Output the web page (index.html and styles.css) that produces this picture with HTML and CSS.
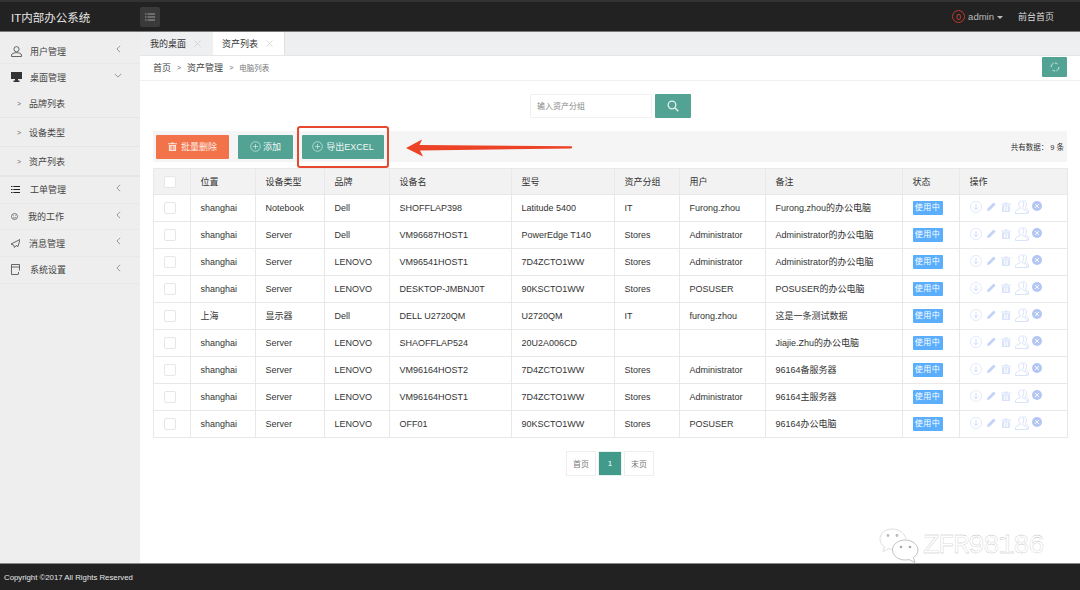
FILE: index.html
```html
<!DOCTYPE html>
<html lang="zh">
<head>
<meta charset="utf-8">
<title>IT内部办公系统</title>
<link rel="stylesheet" href="styles.css">
</head>
<body>
<svg class="defs" width="0" height="0" aria-hidden="true">
  <symbol id="i-left" viewBox="0 0 6 10"><path d="M5 1 1 5l4 4" fill="none" stroke="#666" stroke-width=".8"/></symbol>
  <symbol id="i-down" viewBox="0 0 10 6"><path d="M1 1l4 4 4-4" fill="none" stroke="#666" stroke-width=".8"/></symbol>
  <symbol id="i-plus" viewBox="0 0 11 11"><circle cx="5.5" cy="5.5" r="4.8" fill="none" stroke="#d5ebe6" stroke-width=".7"/><path d="M5.5 3v5M3 5.5h5" stroke="#d5ebe6" stroke-width=".7"/></symbol>
  <symbol id="i-dl" viewBox="0 0 12 12"><circle cx="6" cy="6" r="5.5" fill="none" stroke="#d9e4fb" stroke-width=".8"/><path d="M6 3v5.5M3.8 6.5 6 8.7l2.2-2.2" fill="none" stroke="#c5d5f8" stroke-width=".8"/></symbol>
  <symbol id="i-pen" viewBox="0 0 9 9"><path d="M0 9l.6-2.6L6.6.4l2 2-6 6z" fill="#c3d3f7"/></symbol>
  <symbol id="i-bin" viewBox="0 0 10 10"><path d="M3.5 1.5V.6h3v.9H10v1H0v-1zM1 3.2h8V10H1zM3 4.2V9h.8V4.2zm1.7 0V9h.8V4.2zm1.6 0V9h.8V4.2z" fill="#d9e4fb" fill-rule="evenodd"/></symbol>
  <symbol id="i-bin-w" viewBox="0 0 10 10"><path d="M3.5 1.5V.6h3v.9H10v1H0v-1zM1 3.2h8V10H1zM3 4.2V9h.8V4.2zm1.7 0V9h.8V4.2zm1.6 0V9h.8V4.2z" fill="#fbe3da" fill-rule="evenodd"/></symbol>
  <symbol id="i-user" viewBox="0 0 14 14"><path d="M6.500 1C4.700 1 3.700 2.500 3.700 4.200c0 1.500.6 2.600 1.400 3.300v1.100C3.500 9.400 1 10 .5 11.500v2h11.500v-2C11.500 10 9 9.400 7.400 8.600V7.500c.8-.7 1.400-1.800 1.400-3.300C8.800 2.500 8 1 6.500 1zM8 1c1.800-.4 3.500.6 3.600 2.800.1 1.500-.4 2.700-1.100 3.400v1.100c1.300.6 3 1.100 3 2.400v2.300H12" fill="none" stroke="#cfdcf9" stroke-width=".8"/></symbol>
  <symbol id="i-x" viewBox="0 0 10 10"><circle cx="5" cy="5" r="5" fill="#b3c6f4"/><path d="M3 3l4 4M7 3 3 7" stroke="#fff" stroke-width=".9"/></symbol>
  <symbol id="i-close" viewBox="0 0 7 7"><path d="M.5.500l6 6M6.500.500l-6 6" stroke="#ccc" stroke-width=".7"/></symbol>
</svg>

<div class="app">
  <header class="topbar">
    <div class="brand">IT内部办公系统</div>
    <button class="menu-btn" type="button" aria-label="菜单">
      <svg width="10" height="8" viewBox="0 0 10 8"><path d="M0 1h1.500M2.500 1H10M0 4h1.500M2.500 4H10M0 7h1.500M2.500 7H10" stroke="#aaa" stroke-width=".9"/></svg>
    </button>
    <div class="top-right">
      <span class="count">0</span>
      <span class="admin">admin</span>
      <span class="caret"></span>
      <span class="front">前台首页</span>
    </div>
  </header>

  <div class="middle">
    <aside class="sidebar">
      <div class="side-item tall"><svg class="side-icon" width="11" height="11" viewBox="0 0 11 11"><circle cx="5.500" cy="3.200" r="2.600" fill="none" stroke="#444" stroke-width=".8"/><path d="M.5 10.500V9c0-1.300 2.500-2.300 5-2.300s5 1 5 2.300v1.500z" fill="none" stroke="#444" stroke-width=".8"/></svg><span class="side-label">用户管理</span><svg class="chev" width="5" height="8"><use href="#i-left"/></svg></div>
      <div class="side-item open"><svg class="side-icon" width="11" height="10" viewBox="0 0 11 10"><path d="M0 0h11v7H7v1.500h1.500V10h-6V8.500H4V7H0zM1 1v5h9V1z" fill="#333" fill-rule="evenodd"/><path d="M1 1h9v5H1z" fill="#333"/></svg><span class="side-label">桌面管理</span><svg class="chev-d" width="8" height="5"><use href="#i-down"/></svg></div>
      <div class="side-sub first"><span class="sub-mark">&gt;</span>品牌列表</div>
      <div class="side-sub"><span class="sub-mark">&gt;</span>设备类型</div>
      <div class="side-sub last"><span class="sub-mark">&gt;</span>资产列表</div>
      <div class="side-item"><svg class="side-icon" width="9" height="7" viewBox="0 0 9 7"><path d="M0 .5h1.500M2.300.5H9M0 3.500h1.500M2.300 3.500H9M0 6.500h1.500M2.300 6.500H9" stroke="#222" stroke-width="1"/></svg><span class="side-label wide">工单管理</span><svg class="chev" width="5" height="8"><use href="#i-left"/></svg></div>
      <div class="side-item"><svg class="side-icon" width="7" height="7" viewBox="0 0 7 7"><circle cx="3.500" cy="3.500" r="3" fill="none" stroke="#444" stroke-width=".7"/><path d="M2 4.200c.8.900 2.200.9 3 0M2.200 2.600h.7M4.100 2.600h.7" stroke="#444" stroke-width=".6" fill="none"/></svg><span class="side-label work">我的工作</span><svg class="chev" width="5" height="8"><use href="#i-left"/></svg></div>
      <div class="side-item"><svg class="side-icon" width="9" height="9" viewBox="0 0 9 9"><path d="M9 .5 0 5l2.500 1L3.500 8.500 5 6.500l2 1z" fill="none" stroke="#444" stroke-width=".8"/></svg><span class="side-label msg">消息管理</span><svg class="chev" width="5" height="8"><use href="#i-left"/></svg></div>
      <div class="side-item"><svg class="side-icon" width="10" height="11" viewBox="0 0 10 11"><path d="M7 10.500H.5V.5h8v6M.5 3h8M7.500 8v2.500" fill="none" stroke="#444" stroke-width=".8"/></svg><span class="side-label sys">系统设置</span><svg class="chev" width="5" height="8"><use href="#i-left"/></svg></div>
    </aside>

    <main class="main">
      <nav class="tabs">
        <div class="tab">我的桌面<svg width="7" height="7"><use href="#i-close"/></svg></div>
        <div class="tab active">资产列表<svg width="7" height="7"><use href="#i-close"/></svg></div>
      </nav>

      <div class="crumbs">
        <span>首页</span><span class="sep">&gt;</span><span>资产管理</span><span class="sep">&gt;</span><span class="crumb-last">电脑列表</span>
        <button class="refresh" type="button" aria-label="刷新">
          <svg width="10" height="10" viewBox="0 0 10 10"><path d="M1 5a4 4 0 0 1 6.500-3.100M9 5a4 4 0 0 1-6.500 3.100" fill="none" stroke="#d8eee9" stroke-width=".9" stroke-dasharray="5 1"/></svg>
        </button>
      </div>

      <section class="content">
        <div class="search">
          <input class="search-input" type="text" placeholder="输入资产分组">
          <button class="search-btn" type="button" aria-label="搜索">
            <svg width="12" height="12" viewBox="0 0 12 12"><circle cx="5" cy="5" r="3.800" fill="none" stroke="#e4f2ef" stroke-width="1.300"/><path d="M8 8l3.300 3.300" stroke="#e4f2ef" stroke-width="1.500"/></svg>
          </button>
        </div>

        <div class="toolbar">
          <button class="btn btn-danger" type="button"><svg width="9" height="9"><use href="#i-bin-w"/></svg>批量删除</button>
          <button class="btn btn-add" type="button"><svg width="11" height="11"><use href="#i-plus"/></svg>添加</button>
          <button class="btn btn-export" type="button"><svg width="11" height="11"><use href="#i-plus"/></svg>导出EXCEL</button>
          <span class="total">共有数据： 9 条</span>
          <div class="red-box"></div>
          <svg class="arrow" width="168" height="20" viewBox="0 0 168 20"><path d="M0 10 16 1.500 13.500 7 165 8.300c1.500.1 1.500 2 0 2.100L14 12.500 17 18.500z" fill="#ec4226"/></svg>
        </div>

        <table class="grid">
          <colgroup>
            <col class="c1"><col class="c2"><col class="c3"><col class="c4"><col class="c5"><col class="c6"><col class="c7"><col class="c8"><col class="c9"><col class="c10"><col class="c11">
          </colgroup>
          <thead>
            <tr><th><span class="check"></span></th><th>位置</th><th>设备类型</th><th>品牌</th><th>设备名</th><th>型号</th><th>资产分组</th><th>用户</th><th>备注</th><th>状态</th><th>操作</th></tr>
          </thead>
          <tbody>
            <tr><td><span class="check"></span></td><td>shanghai</td><td>Notebook</td><td>Dell</td><td>SHOFFLAP398</td><td>Latitude 5400</td><td>IT</td><td>Furong.zhou</td><td>Furong.zhou的办公电脑</td><td><span class="badge">使用中</span></td><td><span class="ops"><svg class="o1"><use href="#i-dl"/></svg><svg class="o2"><use href="#i-pen"/></svg><svg class="o3"><use href="#i-bin"/></svg><svg class="o4"><use href="#i-user"/></svg><svg class="o5"><use href="#i-x"/></svg></span></td></tr>
            <tr><td><span class="check"></span></td><td>shanghai</td><td>Server</td><td>Dell</td><td>VM96687HOST1</td><td>PowerEdge T140</td><td>Stores</td><td>Administrator</td><td>Administrator的办公电脑</td><td><span class="badge">使用中</span></td><td><span class="ops"><svg class="o1"><use href="#i-dl"/></svg><svg class="o2"><use href="#i-pen"/></svg><svg class="o3"><use href="#i-bin"/></svg><svg class="o4"><use href="#i-user"/></svg><svg class="o5"><use href="#i-x"/></svg></span></td></tr>
            <tr><td><span class="check"></span></td><td>shanghai</td><td>Server</td><td>LENOVO</td><td>VM96541HOST1</td><td>7D4ZCTO1WW</td><td>Stores</td><td>Administrator</td><td>Administrator的办公电脑</td><td><span class="badge">使用中</span></td><td><span class="ops"><svg class="o1"><use href="#i-dl"/></svg><svg class="o2"><use href="#i-pen"/></svg><svg class="o3"><use href="#i-bin"/></svg><svg class="o4"><use href="#i-user"/></svg><svg class="o5"><use href="#i-x"/></svg></span></td></tr>
            <tr><td><span class="check"></span></td><td>shanghai</td><td>Server</td><td>LENOVO</td><td>DESKTOP-JMBNJ0T</td><td>90KSCTO1WW</td><td>Stores</td><td>POSUSER</td><td>POSUSER的办公电脑</td><td><span class="badge">使用中</span></td><td><span class="ops"><svg class="o1"><use href="#i-dl"/></svg><svg class="o2"><use href="#i-pen"/></svg><svg class="o3"><use href="#i-bin"/></svg><svg class="o4"><use href="#i-user"/></svg><svg class="o5"><use href="#i-x"/></svg></span></td></tr>
            <tr><td><span class="check"></span></td><td>上海</td><td>显示器</td><td>Dell</td><td>DELL U2720QM</td><td>U2720QM</td><td>IT</td><td>furong.zhou</td><td>这是一条测试数据</td><td><span class="badge">使用中</span></td><td><span class="ops"><svg class="o1"><use href="#i-dl"/></svg><svg class="o2"><use href="#i-pen"/></svg><svg class="o3"><use href="#i-bin"/></svg><svg class="o4"><use href="#i-user"/></svg><svg class="o5"><use href="#i-x"/></svg></span></td></tr>
            <tr><td><span class="check"></span></td><td>shanghai</td><td>Server</td><td>LENOVO</td><td>SHAOFFLAP524</td><td>20U2A006CD</td><td></td><td></td><td>Jiajie.Zhu的办公电脑</td><td><span class="badge">使用中</span></td><td><span class="ops"><svg class="o1"><use href="#i-dl"/></svg><svg class="o2"><use href="#i-pen"/></svg><svg class="o3"><use href="#i-bin"/></svg><svg class="o4"><use href="#i-user"/></svg><svg class="o5"><use href="#i-x"/></svg></span></td></tr>
            <tr><td><span class="check"></span></td><td>shanghai</td><td>Server</td><td>LENOVO</td><td>VM96164HOST2</td><td>7D4ZCTO1WW</td><td>Stores</td><td>Administrator</td><td>96164备服务器</td><td><span class="badge">使用中</span></td><td><span class="ops"><svg class="o1"><use href="#i-dl"/></svg><svg class="o2"><use href="#i-pen"/></svg><svg class="o3"><use href="#i-bin"/></svg><svg class="o4"><use href="#i-user"/></svg><svg class="o5"><use href="#i-x"/></svg></span></td></tr>
            <tr><td><span class="check"></span></td><td>shanghai</td><td>Server</td><td>LENOVO</td><td>VM96164HOST1</td><td>7D4ZCTO1WW</td><td>Stores</td><td>Administrator</td><td>96164主服务器</td><td><span class="badge">使用中</span></td><td><span class="ops"><svg class="o1"><use href="#i-dl"/></svg><svg class="o2"><use href="#i-pen"/></svg><svg class="o3"><use href="#i-bin"/></svg><svg class="o4"><use href="#i-user"/></svg><svg class="o5"><use href="#i-x"/></svg></span></td></tr>
            <tr><td><span class="check"></span></td><td>shanghai</td><td>Server</td><td>LENOVO</td><td>OFF01</td><td>90KSCTO1WW</td><td>Stores</td><td>POSUSER</td><td>96164办公电脑</td><td><span class="badge">使用中</span></td><td><span class="ops"><svg class="o1"><use href="#i-dl"/></svg><svg class="o2"><use href="#i-pen"/></svg><svg class="o3"><use href="#i-bin"/></svg><svg class="o4"><use href="#i-user"/></svg><svg class="o5"><use href="#i-x"/></svg></span></td></tr>
          </tbody>
        </table>

        <div class="pager">
          <span class="page">首页</span><span class="page current">1</span><span class="page">末页</span>
        </div>

        <div class="watermark">
          <svg width="40" height="35" viewBox="0 0 40 35"><path d="M13 1C6 1 1 5.500 1 11c0 3.200 1.700 6 4.500 7.800L4 23.500l5.500-2.700c1 .3 2 .4 3.300.5M27 11C25.500 5 20 1 13 1" fill="#fff" stroke="#d5d5d5" stroke-width=".8"/><path d="M26 12c-7 0-12.500 4.500-12.500 10S19 32 26 32c1.300 0 2.600-.2 3.800-.5L36 34.500l-1.600-5c2.900-1.800 4.600-4.500 4.600-7.500 0-5.500-6-10-13-10z" fill="#fff" stroke="#bbb" stroke-width=".9"/><circle cx="9" cy="7.500" r="1.400" fill="#bbb"/><circle cx="18" cy="7.500" r="1.400" fill="#bbb"/><circle cx="22" cy="19" r="1.300" fill="#aaa"/><circle cx="31" cy="19" r="1.300" fill="#aaa"/></svg>
          <span class="wm-text">ZFR98186</span>
        </div>
      </section>
    </main>
  </div>

  <footer class="footer">Copyright ©2017 All Rights Reserved</footer>
</div>
</body>
</html>
```

FILE: styles.css
```css
* { box-sizing: border-box; }
html, body { margin: 0; padding: 0; height: 100%; overflow: hidden; }
body {
  font-family: "Liberation Sans", "Noto Sans CJK SC", sans-serif;
  font-size: 9px;
  color: #333;
  background: #fff;
}
button { font: inherit; border: 0; padding: 0; cursor: pointer; }
.defs { position: absolute; }

.app { display: flex; flex-direction: column; height: 590px; }

/* top bar */
.topbar {
  flex: 0 0 32px;
  display: flex;
  align-items: center;
  background: #222;
  border-top: 2px solid #333;
  border-bottom: 1px solid #777;
  color: #ddd;
}
.brand { width: 140px; padding-left: 11px; font-size: 11.500px; font-weight: 400; color: #e6e6e6; }
.menu-btn {
  width: 20px; height: 20px;
  display: flex; align-items: center; justify-content: center;
  background: #3a3a3a;
  border-radius: 2px;
}
.top-right { margin-left: auto; padding-right: 26px; display: flex; align-items: center; }
.count {
  width: 13px; height: 13px;
  display: flex; align-items: center; justify-content: center;
  border: 1px solid #c0392b;
  border-radius: 50%;
  color: #c8452f;
  font-size: 9px;
}
.admin { margin-left: 3px; font-size: 9.500px; color: #bbb; }
.caret {
  margin-left: 3px; margin-top: 1px;
  border-left: 3px solid transparent;
  border-right: 3px solid transparent;
  border-top: 3px solid #bbb;
}
.front { margin-left: 15px; color: #ddd; }

/* frame */
.middle { flex: 1; display: flex; min-height: 0; }
.sidebar { flex: 0 0 140px; background: #eee; padding-top: 7px; color: #444; }
.side-item {
  height: 26.700px;
  display: flex;
  align-items: center;
  padding-left: 11px;
  border-bottom: 1px solid #e8e8e8;
  position: relative;
}
.side-item.tall { height: 25px; }
.side-item.open { height: 26px; border-bottom: 0; }
.side-icon { flex: 0 0 auto; }
.side-label { margin-left: 8px; }
.side-label.wide { margin-left: 10px; }
.side-label.work { margin-left: 10px; }
.side-label.msg { margin-left: 9px; }
.side-label.sys { margin-left: 9px; }
.chev { margin-left: auto; margin-right: 19px; margin-top: -4px; }
.chev-d { margin-left: auto; margin-right: 18px; margin-top: -4px; }
.side-sub {
  height: 29px;
  display: flex;
  align-items: center;
  padding-left: 17px;
  border-bottom: 1px solid #e6e6e6;
}
.side-sub.first { height: 28px; }
.side-sub.last { border-bottom: 2px solid #e6e6e6; height: 30px; }
.sub-mark { width: 12px; font-size: 7px; color: #666; }

.main { flex: 1; min-width: 0; display: flex; flex-direction: column; }

.tabs {
  flex: 0 0 23px;
  display: flex;
  background: #eeeff1;
  border-bottom: 1px solid #e6e6e6;
  padding-left: 1px;
}
.tab {
  width: 72px;
  height: 22px;
  display: flex;
  align-items: center;
  gap: 8px;
  padding-left: 9px;
}
.tab.active { height: 23px; background: #fff; border-right: 1px solid #e0e0e0; }

.crumbs {
  flex: 0 0 25px;
  display: flex;
  align-items: center;
  padding: 0 13px 1px;
  border-bottom: 1px solid #f0f0f0;
  color: #444;
}
.sep { margin: 0 6px; font-size: 7px; color: #666; }
.crumb-last { font-size: 7.500px; color: #777; }
.refresh {
  margin-left: auto;
  margin-top: -1px;
  width: 25px; height: 20px;
  display: flex; align-items: center; justify-content: center;
  background: #52a394;
  border-radius: 1px;
}

.content { flex: 1; position: relative; padding: 13px 13px 0; }

.search { display: flex; justify-content: center; gap: 3px; padding-left: 1px; }
.search-input {
  width: 122px; height: 24px;
  padding: 0 6px;
  border: 1px solid #f0f0f0;
  border-radius: 1px;
  font: 8px "Liberation Sans", "Noto Sans CJK SC", sans-serif;
  outline: 0;
}
.search-input::placeholder { color: #888; opacity: 1; }
.search-btn {
  width: 36px; height: 24px;
  display: flex; align-items: center; justify-content: center;
  background: #52a394;
  border-radius: 1px;
}

.toolbar {
  position: relative;
  margin-top: 13px;
  height: 31px;
  display: flex;
  align-items: center;
  gap: 9px;
  padding: 0 3px;
  background: #f5f5f5;
}
.btn {
  height: 24px;
  display: flex; align-items: center; justify-content: center;
  gap: 2px;
  color: #f0f6f5;
  border-radius: 1px;
}
.btn-danger { width: 73px; background: #f2734a; gap: 4px; color: #fdeee8; }
.btn-add { width: 55px; background: #52a394; }
.btn-export { width: 82px; background: #52a394; gap: 3px; }
.total { margin-left: auto; font-size: 7.500px; color: #333; }
.red-box {
  position: absolute;
  left: 144px; top: -5px;
  width: 92px; height: 42px;
  border: 2px solid #e8482f;
  border-radius: 3px;
}
.arrow { position: absolute; left: 253px; top: 7px; }

/* table */
.grid {
  width: 914px;
  margin-top: 6px;
  table-layout: fixed;
  border-collapse: collapse;
  line-height: 12px;
}
.c1 { width: 37px; } .c2 { width: 65px; } .c3 { width: 69px; } .c4 { width: 65px; }
.c5 { width: 122px; } .c6 { width: 103px; } .c7 { width: 65px; } .c8 { width: 86px; }
.c9 { width: 137px; } .c10 { width: 57px; } .c11 { width: 108px; }
.grid th, .grid td {
  height: 27px;
  padding: 0 0 0 9.500px;
  border: 1px solid #e8e8e8;
  text-align: left;
  font-weight: 400;
  white-space: nowrap;
  vertical-align: middle;
}
.grid th { height: 26px; background: #f2f2f2; }
.check {
  display: block;
  width: 12px; height: 12px;
  border: 1px solid #e6e6e6;
  border-radius: 2px;
  background: #fff;
}
.badge {
  display: inline-block;
  vertical-align: middle;
  width: 30px; height: 14px;
  line-height: 14px;
  text-align: center;
  font-size: 8px;
  letter-spacing: .5px;
  color: #fff;
  background: #5aaefc;
  border-radius: 1px;
}
.ops { display: flex; align-items: center; margin-top: -3px; }
.ops svg { flex: 0 0 auto; }
.o1 { width: 12px; height: 12px; }
.o2 { width: 9px; height: 9px; margin-left: 5px; }
.o3 { width: 10px; height: 10px; margin-left: 5px; }
.o4 { width: 14px; height: 14px; margin-left: 4px; }
.o5 { width: 10px; height: 10px; margin-left: 3px; margin-top: -2px; }

/* pager */
.pager { margin-top: 13px; display: flex; justify-content: center; gap: 2px; }
.page {
  width: 30px; height: 25px;
  display: flex; align-items: center; justify-content: center;
  border: 1px solid #eee;
  font-size: 8px;
  color: #777;
}
.page.current { width: 24px; background: #429a8a; color: #fff; border-color: #e6f2ef; }

.watermark {
  position: absolute;
  left: 739px; top: 447px;
  display: flex;
  align-items: center;
  gap: 4px;
}
.wm-text {
  font: 28px "Liberation Mono", monospace;
  letter-spacing: -1.800px;
  color: #fff;
  -webkit-text-stroke: .3px #bdbdbd;
}

.footer {
  flex: 0 0 27px;
  display: flex;
  align-items: center;
  padding-left: 4px;
  background: #222;
  border-top: 1px solid #888;
  color: #e6e6e6;
  font-size: 7.800px;
}
```
